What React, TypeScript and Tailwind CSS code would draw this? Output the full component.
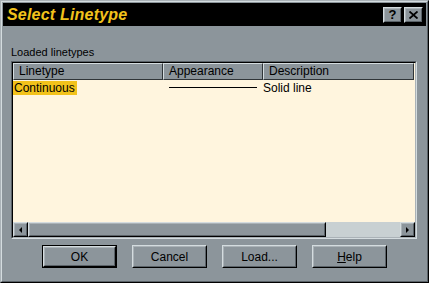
const font = { fontFamily: '"Liberation Sans", Arial, sans-serif' }

const Bevel = ({ children, className = '' }: { children: React.ReactNode; className?: string }) => (
  <div className={`border border-t-[#d4dcdf] border-l-[#d4dcdf] border-b-black border-r-black ${className}`}>
    <div className="h-full w-full border border-t-[#aab2b7] border-l-[#aab2b7] border-b-[#5a6268] border-r-[#5a6268]">
      {children}
    </div>
  </div>
)

const DlgButton = ({ label, isDefault }: { label: React.ReactNode; isDefault?: boolean }) => (
  <div className={`h-[23px] w-[75px] ${isDefault ? 'border border-black' : ''}`}>
    <Bevel className="h-full w-full">
      <div className="flex h-full items-center justify-center text-[12px] text-black">{label}</div>
    </Bevel>
  </div>
)

const HeaderCell = ({ label, w }: { label: string; w: string }) => (
  <div className={`${w} h-[17px] shrink-0 border-t border-l border-t-[#d4dcdf] border-l-[#d4dcdf] border-b border-r border-b-[#303538] border-r-[#303538] bg-[#8c959b] pl-[5px] text-[12px] leading-[15px] text-black`}>
    {label}
  </div>
)

export default function App() {
  return (
    <div style={font} className="h-[283px] w-[429px] overflow-hidden bg-[#8c959b]">
      <div className="h-full w-full border border-t-[#aab2b7] border-l-[#aab2b7] border-b-black border-r-black">
        <div className="h-full w-full border border-t-[#d4dcdf] border-l-[#d4dcdf] border-b-[#5a6268] border-r-[#5a6268] p-px">
          {/* title bar */}
          <div className="flex h-[23px] items-center justify-between bg-black pl-[4px] pr-[3px]">
            <span className="text-[16px] font-bold italic tracking-[0.2px] text-[#f2c21b]">Select Linetype</span>
            <div className="flex gap-[2px]">
              <Bevel className="h-[16px] w-[19px]">
                <div className="flex h-full items-center justify-center bg-[#8c959b] text-[13px] font-bold leading-none text-black">?</div>
              </Bevel>
              <Bevel className="h-[16px] w-[19px]">
                <div className="flex h-full items-center justify-center bg-[#8c959b]">
                  <svg width="9" height="8" viewBox="0 0 9 8">
                    <path d="M0.5 0.5 L8.5 7.5 M8.5 0.5 L0.5 7.5" stroke="black" strokeWidth="1.8" />
                  </svg>
                </div>
              </Bevel>
            </div>
          </div>

          <div className="px-[8px] pt-[20px]">
            <div className="text-[11px] leading-[13px] text-black">Loaded linetypes</div>

            {/* list box */}
            <div className="mt-[2px] h-[178px] w-[406px] border border-t-[#5a6268] border-l-[#5a6268] border-b-[#d4dcdf] border-r-[#d4dcdf]">
              <div className="flex h-full flex-col border border-t-black border-l-black border-b-[#aab2b7] border-r-[#aab2b7] bg-[#fff5de]">
                <div className="flex bg-[#8c959b]">
                  <HeaderCell label="Linetype" w="w-[150px]" />
                  <HeaderCell label="Appearance" w="w-[100px]" />
                  <HeaderCell label="Description" w="w-[151px]" />
                  <div className="h-[17px] flex-1 bg-[#fff5de]" />
                </div>
                <div className="flex-1">
                  <div className="flex h-[15px] items-center text-[12px] text-black">
                    <div className="w-[150px]">
                      <span className="bg-[#f2c21b] pl-px pr-[2px]">Continuous</span>
                    </div>
                    <div className="flex w-[100px] items-center pl-[6px]">
                      <div className="h-px w-[88px] bg-black" />
                    </div>
                    <div>Solid line</div>
                  </div>
                </div>
                {/* horizontal scrollbar */}
                <div className="flex h-[15px] bg-[#c8d0d2]">
                  <Bevel className="h-[15px] w-[15px]">
                    <div className="flex h-full items-center justify-center bg-[#8c959b]">
                      <svg width="3" height="6" viewBox="0 0 3 6"><path d="M3 0 L0 3 L3 6 Z" fill="black" /></svg>
                    </div>
                  </Bevel>
                  <Bevel className="h-[15px] w-[298px]">
                    <div className="h-full bg-[#8c959b]" />
                  </Bevel>
                  <div className="flex-1" />
                  <Bevel className="h-[15px] w-[15px]">
                    <div className="flex h-full items-center justify-center bg-[#8c959b]">
                      <svg width="3" height="6" viewBox="0 0 3 6"><path d="M0 0 L3 3 L0 6 Z" fill="black" /></svg>
                    </div>
                  </Bevel>
                </div>
              </div>
            </div>

            {/* buttons */}
            <div className="mt-[6px] flex gap-[15px] pl-[31px]">
              <DlgButton label="OK" isDefault />
              <DlgButton label="Cancel" />
              <DlgButton label="Load..." />
              <DlgButton label={<><span className="underline">H</span>elp</>} />
            </div>
          </div>
        </div>
      </div>
    </div>
  )
}
